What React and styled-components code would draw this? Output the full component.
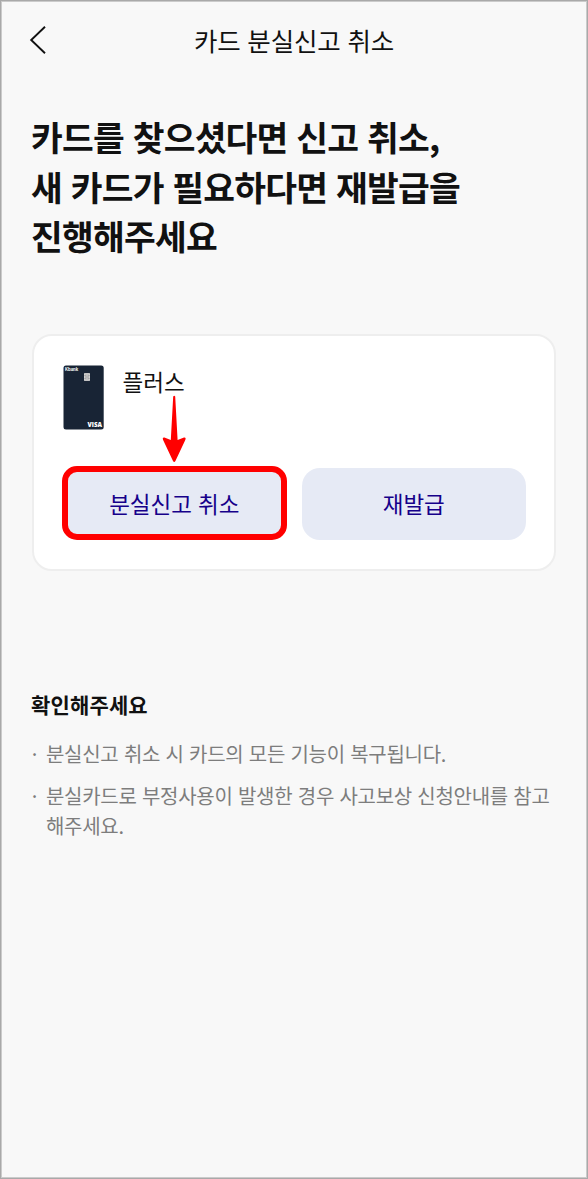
import React from "react";
import styled, { createGlobalStyle, ThemeProvider } from "styled-components";

const theme = {
  background: "#f8f8f8",
  ink: "#111111",
  grey: "#7d7d7d",
  line: "#eeeeee",
  button: "#e6eaf5",
  navy: "#16008a",
  red: "#ff0000",
};

const GlobalStyle = createGlobalStyle`
  * {
    box-sizing: border-box;
  }

  body {
    margin: 0;
    font-family: "Noto Sans CJK KR", "Noto Sans", sans-serif;
  }
`;

const Screen = styled.div`
  height: 1179px;
  border: 1px solid #a9a9a9;
  box-shadow: inset 0 0 0 1px #cbcbcb;
  background-color: ${(props) => props.theme.background};
  color: ${(props) => props.theme.ink};
`;

const Header = styled.header`
  display: grid;
  grid-template-columns: 80px 1fr 80px;
  align-items: center;
  height: 78px;
`;

const BackButton = styled.button`
  display: flex;
  padding: 0 0 0 28px;
  border: none;
  background: none;

  svg {
    display: block;
  }
`;

const HeaderTitle = styled.h1`
  margin: 0;
  font-size: 25.5px;
  font-weight: 400;
  line-height: 36px;
  letter-spacing: -0.15px;
  word-spacing: 1.3px;
  text-align: center;
  white-space: nowrap;
`;

const Main = styled.main`
  padding: 33px 31px 0 30px;
`;

const Headline = styled.h2`
  margin: 0;
  font-size: 34.5px;
  font-weight: 700;
  line-height: 49.5px;
  letter-spacing: -0.75px;
  word-spacing: 1.6px;
  white-space: nowrap;

  span {
    display: block;
  }
`;

const Card = styled.section`
  height: 237px;
  margin: 73px 0 0 1px;
  padding: 29px 28px 0;
  border: 2px solid ${(props) => props.theme.line};
  border-radius: 20px;
  background-color: white;
`;

const CardInfo = styled.div`
  display: flex;
  gap: 18px;
  height: 101px;
  padding-left: 1px;

  svg {
    flex: none;
  }
`;

const CardName = styled.p`
  margin: -1px 0 0 0.5px;
  font-size: 22.5px;
  line-height: 34px;
`;

const Actions = styled.div`
  display: grid;
  grid-template-columns: 1fr 1fr;
  gap: 15px;
`;

const ActionSlot = styled.div`
  position: relative;
`;

const ActionButton = styled.button`
  display: block;
  width: 100%;
  height: ${(props) => (props.$marked ? "74px" : "72px")};
  margin-top: ${(props) => (props.$marked ? "0" : "2px")};
  padding: ${(props) => (props.$marked ? "0" : "0 0 2px")};
  border: ${(props) => (props.$marked ? `6px solid ${props.theme.red}` : "none")};
  border-radius: ${(props) => (props.$marked ? "15px" : "18px")};
  background-color: ${(props) => props.theme.button};
  color: ${(props) => props.theme.navy};
  font-family: inherit;
  font-size: 22.5px;
  word-spacing: 1px;
`;

const Arrow = styled.svg`
  position: absolute;
  left: 100px;
  top: -71px;
`;

const Notice = styled.section`
  margin-top: 117px;
`;

const NoticeTitle = styled.h3`
  margin: 0 0 19px;
  font-size: 21px;
  font-weight: 700;
  line-height: 32px;
  letter-spacing: 0.15px;
`;

const NoticeList = styled.ul`
  display: flex;
  flex-direction: column;
  gap: 12px;
  margin: 0;
  padding: 0;
  list-style: none;
`;

const NoticeItem = styled.li`
  display: grid;
  grid-template-columns: 15px 1fr;
  color: ${(props) => props.theme.grey};
  font-size: 20px;
  line-height: 30px;
  letter-spacing: -0.28px;
  word-spacing: 1.2px;
  white-space: nowrap;

  span {
    display: block;
  }
`;

const Bullet = styled.span`
  margin-left: -2px;
`;

const headline = ["카드를 찾으셨다면 신고 취소,", "새 카드가 필요하다면 재발급을", "진행해주세요"];

const notices = [
  ["분실신고 취소 시 카드의 모든 기능이 복구됩니다."],
  ["분실카드로 부정사용이 발생한 경우 사고보상 신청안내를 참고", "해주세요."],
];

function CardPicture() {
  return (
    <svg width="41" height="65" viewBox="0 0 41 65">
      <rect x="0.5" y="0.5" width="40.2" height="64" rx="2.5" fill="#182435" />
      <text x="2" y="6" fill="#fff" fontFamily="Inter" fontSize="4.2" fontWeight="700">
        Kbank
      </text>
      <rect x="21" y="8" width="6" height="8" rx="0.8" fill="#d2d2d0" />
      <path d="M21 10.5h2v3h-2M27 10.5h-2v3h2M23 8v8M25 8v8" fill="none" stroke="#85878a" strokeWidth="0.4" />
      <text
        x="24.5"
        y="62"
        fill="#fff"
        fontFamily="Open Sans"
        fontSize="6.7"
        fontWeight="800"
        textLength="14.5"
        lengthAdjust="spacingAndGlyphs"
      >
        VISA
      </text>
    </svg>
  );
}

export default function App() {
  return (
    <ThemeProvider theme={theme}>
      <GlobalStyle />
      <Screen>
        <Header>
          <BackButton aria-label="뒤로">
            <svg width="18" height="30" viewBox="0 0 18 30" fill="none">
              <path d="M16 1.8 L2.2 15 L16 28.2" stroke="#111" strokeWidth="1.9" />
            </svg>
          </BackButton>
          <HeaderTitle>카드 분실신고 취소</HeaderTitle>
        </Header>

        <Main>
          <Headline>
            {headline.map((line) => (
              <span key={line}>{line}</span>
            ))}
          </Headline>

          <Card>
            <CardInfo>
              <CardPicture />
              <CardName>플러스</CardName>
            </CardInfo>
            <Actions>
              <ActionSlot>
                <ActionButton $marked>분실신고 취소</ActionButton>
                <Arrow width="25" height="68" viewBox="0 0 25 68">
                  <path
                    d="M11.2 1.5 Q12.2 0 13.2 1.5 L15.6 45 L22 42.6 Q24.4 42.2 23.4 44.8 L13.4 66 Q12.2 67.8 11 66 L1 44.8 Q0 42.2 2.4 42.6 L8.8 45 Z"
                    fill="#ff0000"
                  />
                </Arrow>
              </ActionSlot>
              <ActionSlot>
                <ActionButton>재발급</ActionButton>
              </ActionSlot>
            </Actions>
          </Card>

          <Notice>
            <NoticeTitle>확인해주세요</NoticeTitle>
            <NoticeList>
              {notices.map((lines) => (
                <NoticeItem key={lines[0]}>
                  <Bullet>·</Bullet>
                  <div>
                    {lines.map((line) => (
                      <span key={line}>{line}</span>
                    ))}
                  </div>
                </NoticeItem>
              ))}
            </NoticeList>
          </Notice>
        </Main>
      </Screen>
    </ThemeProvider>
  );
}
